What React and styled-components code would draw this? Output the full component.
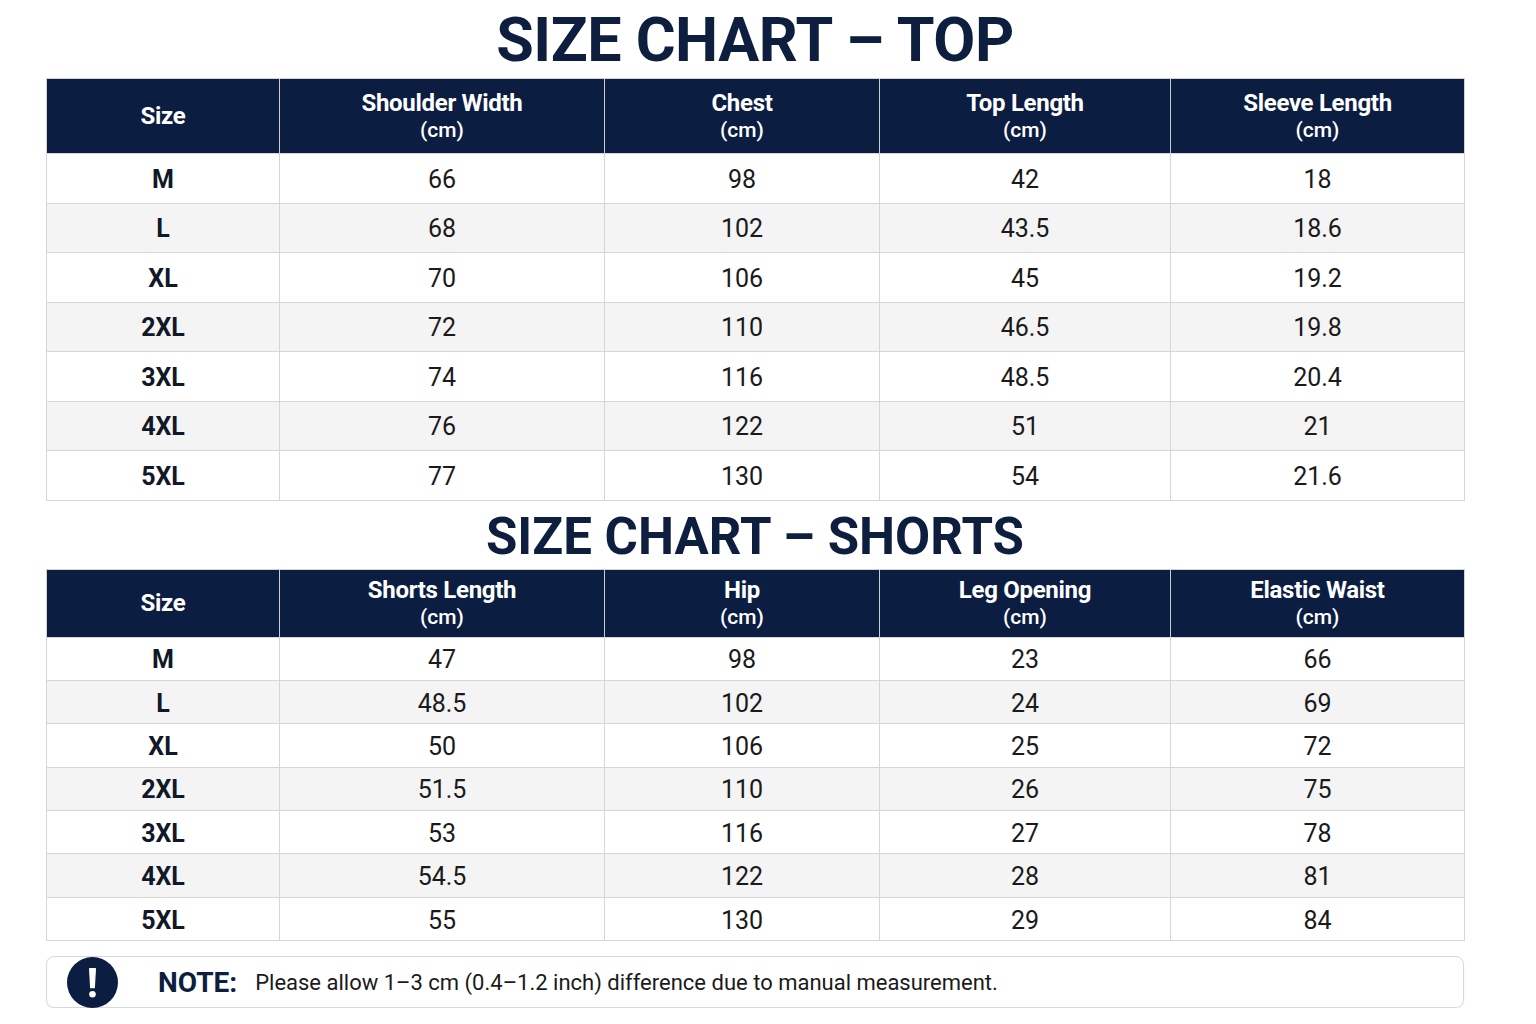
import React from 'react';
import styled, { createGlobalStyle } from 'styled-components';

const GlobalStyle = createGlobalStyle`
  html, body {
    margin: 0;
    padding: 0;
    background: #ffffff;
  }
  body {
    font-family: Roboto, "Liberation Sans", sans-serif;
    color: #111111;
  }
`;

const Page = styled.div`
  width: 1418px;
  margin: 0 0 0 46px;
  display: flex;
  flex-direction: column;
`;

const Title = styled.h1`
  margin: 0;
  height: ${p => p.h}px;
  display: flex;
  align-items: center;
  justify-content: center;
  font-size: ${p => p.size}px;
  font-weight: 700;
  letter-spacing: ${p => p.ls || 0}px;
  color: #0e1e3f;
  padding-top: ${p => p.pt || 0}px;
  box-sizing: border-box;
`;

const Table = styled.table`
  width: 100%;
  table-layout: fixed;
  border-collapse: collapse;
  border: 1px solid #d3d3d3;
`;

const HeadRow = styled.tr`
  height: ${p => p.h}px;
`;

const HeadCell = styled.th`
  padding: 0;
  background: #0c1d42;
  color: #ffffff;
  text-align: center;
  vertical-align: middle;
  border-left: 1px solid #c9ccd3;
  &:first-child {
    border-left: none;
  }
`;

const HeadName = styled.div`
  font-size: 24px;
  font-weight: 700;
  line-height: 28px;
  letter-spacing: -0.3px;
`;

const HeadUnit = styled.div`
  font-size: 21px;
  font-weight: 500;
  line-height: 26px;
`;

const Row = styled.tr`
  height: ${p => p.h}px;
  background: ${p => (p.alt ? '#f4f4f4' : '#ffffff')};
`;

const Cell = styled.td`
  padding: 3px 0 0;
  line-height: 26px;
  text-align: center;
  vertical-align: middle;
  border: 1px solid #d6d6d6;
  font-size: 25px;
  font-weight: ${p => (p.bold ? 700 : 400)};
  color: ${p => (p.bold ? '#111827' : '#1a1a1a')};
`;

const Note = styled.div`
  margin-top: 15px;
  height: 52px;
  box-sizing: border-box;
  border: 1.5px solid #d9d9d9;
  border-radius: 8px;
  display: flex;
  align-items: center;
  padding-left: 20px;
  box-shadow: 0 1px 2px rgba(0, 0, 0, 0.06);
`;

const NoteIcon = styled.svg`
  width: 51px;
  height: 51px;
  flex: none;
`;

const NoteLabel = styled.span`
  margin-left: 40px;
  font-size: 28px;
  font-weight: 700;
  color: #0e1e3f;
`;

const NoteText = styled.span`
  margin-left: 18px;
  font-size: 22px;
  color: #1a1a1a;
`;

const colWidths = [233, 325, 275, 291, 294];

const topChart = {
  headers: ['Shoulder Width', 'Chest', 'Top Length', 'Sleeve Length'],
  rows: [
    ['M', '66', '98', '42', '18'],
    ['L', '68', '102', '43.5', '18.6'],
    ['XL', '70', '106', '45', '19.2'],
    ['2XL', '72', '110', '46.5', '19.8'],
    ['3XL', '74', '116', '48.5', '20.4'],
    ['4XL', '76', '122', '51', '21'],
    ['5XL', '77', '130', '54', '21.6'],
  ],
};

const shortsChart = {
  headers: ['Shorts Length', 'Hip', 'Leg Opening', 'Elastic Waist'],
  rows: [
    ['M', '47', '98', '23', '66'],
    ['L', '48.5', '102', '24', '69'],
    ['XL', '50', '106', '25', '72'],
    ['2XL', '51.5', '110', '26', '75'],
    ['3XL', '53', '116', '27', '78'],
    ['4XL', '54.5', '122', '28', '81'],
    ['5XL', '55', '130', '29', '84'],
  ],
};

function SizeTable({ chart, headH, rowH }) {
  return (
    <Table>
      <colgroup>
        {colWidths.map((w, i) => (
          <col key={i} style={{ width: w }} />
        ))}
      </colgroup>
      <thead>
        <HeadRow h={headH}>
          <HeadCell>
            <HeadName>Size</HeadName>
          </HeadCell>
          {chart.headers.map(h => (
            <HeadCell key={h}>
              <HeadName>{h}</HeadName>
              <HeadUnit>(cm)</HeadUnit>
            </HeadCell>
          ))}
        </HeadRow>
      </thead>
      <tbody>
        {chart.rows.map((r, i) => (
          <Row key={r[0]} h={rowH} alt={i % 2 === 1}>
            {r.map((v, j) => (
              <Cell key={j} bold={j === 0}>
                {v}
              </Cell>
            ))}
          </Row>
        ))}
      </tbody>
    </Table>
  );
}

export default function App() {
  return (
    <>
      <GlobalStyle />
      <Page>
        <Title h={78} size={61} ls={-0.5} pt={2}>
          SIZE CHART – TOP
        </Title>
        <SizeTable chart={topChart} headH={75} rowH={49.5} />
        <Title h={68} size={51} pt={4}>
          SIZE CHART – SHORTS
        </Title>
        <SizeTable chart={shortsChart} headH={68} rowH={43.4} />
        <Note>
          <NoteIcon viewBox="0 0 50 50">
            <circle cx="25" cy="25" r="25" fill="#0c1d42" />
            <path d="M22.2 11.5h5.6l-1 18.5h-3.6z" fill="#ffffff" strokeLinejoin="round" stroke="#ffffff" strokeWidth="1.2" />
            <circle cx="25" cy="36.5" r="3.2" fill="#ffffff" />
          </NoteIcon>
          <NoteLabel>NOTE:</NoteLabel>
          <NoteText>
            Please allow 1–3 cm (0.4–1.2 inch) difference due to manual measurement.
          </NoteText>
        </Note>
      </Page>
    </>
  );
}
